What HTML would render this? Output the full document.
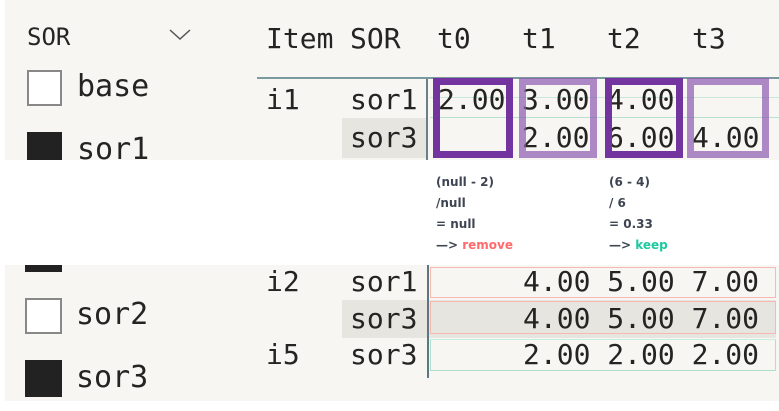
<!DOCTYPE html>
<html><head><style>
*{margin:0;padding:0;box-sizing:border-box}
body{width:779px;height:411px;background:#fff;position:relative;overflow:hidden;font-family:"DejaVu Sans Mono","Liberation Mono",monospace;color:#252423}
.a{position:absolute}
.t{position:absolute;font-size:28px;line-height:30px;white-space:nowrap}
.b{position:absolute;font-size:28px;line-height:30px;white-space:nowrap}
.n{font-family:"DejaVu Sans",sans-serif;font-weight:bold;font-size:12px;color:#3d4452;position:absolute;line-height:14px}
</style></head><body>
<div class="a" style="left:5px;top:0;width:774px;height:160px;background:#f8f6f3;overflow:hidden">
 <div class="t" style="left:22px;top:22px;font-size:24px">SOR</div>
 <svg class="a" style="left:163px;top:28px" width="24" height="14"><path d="M2 2 L12 11 L22 2" stroke="#555" stroke-width="1.5" fill="none"/></svg>
 <div class="a" style="left:22px;top:70px;width:35px;height:36px;border:2px solid #888;background:#fff"></div>
 <div class="t" style="left:72px;top:72px;font-size:30px">base</div>
 <div class="a" style="left:22px;top:132px;width:35px;height:40px;background:#222"></div>
 <div class="t" style="left:72px;top:135px;font-size:30px">sor1</div>
 <div class="t" style="left:261px;top:24px">Item</div>
 <div class="t" style="left:345px;top:24px">SOR</div>
 <div class="t" style="left:432px;top:24px">t0</div>
 <div class="t" style="left:517px;top:24px">t1</div>
 <div class="t" style="left:602px;top:24px">t2</div>
 <div class="t" style="left:687px;top:24px">t3</div>
 <div class="a" style="left:252px;top:77px;width:522px;height:2px;background:#7a9aa0"></div>
 <div class="a" style="left:337px;top:118px;width:84px;height:40px;background:#e6e5e0"></div>
 <div class="a" style="left:421px;top:79px;width:2px;height:81px;background:#6a8088"></div>
 <div class="a" style="left:425px;top:117px;width:349px;height:1px;background:#b8e0d0"></div>
 <div class="a" style="left:425px;top:97px;width:349px;height:1px;background:#c8e8dc"></div>
 <div class="t" style="left:261px;top:85px">i1</div>
 <div class="t" style="left:345px;top:85px">sor1</div>
 <div class="t" style="left:345px;top:123px">sor3</div>
 <div class="t" style="left:433px;top:85px">2.00</div>
 <div class="t" style="left:517px;top:85px">3.00</div>
 <div class="t" style="left:602px;top:85px">4.00</div>
 <div class="t" style="left:517px;top:123px">2.00</div>
 <div class="t" style="left:602px;top:123px">6.00</div>
 <div class="t" style="left:687px;top:123px">4.00</div>
 <div class="a" style="left:428px;top:78px;width:80px;height:80px;border:7px solid #7434a0"></div>
 <div class="a" style="left:514px;top:78px;width:78px;height:80px;border:7px solid rgba(140,90,175,.7)"></div>
 <div class="a" style="left:600px;top:78px;width:78px;height:80px;border:7px solid #7434a0"></div>
 <div class="a" style="left:682px;top:78px;width:82px;height:80px;border:7px solid rgba(140,90,175,.7)"></div>
</div>
<div class="n" style="left:436px;top:175px">(null - 2)</div>
<div class="n" style="left:436px;top:196px">/null</div>
<div class="n" style="left:436px;top:217px">= null</div>
<div class="n" style="left:436px;top:238px">—&gt; <span style="color:#ff6a6a">remove</span></div>
<div class="n" style="left:609px;top:175px">(6 - 4)</div>
<div class="n" style="left:609px;top:196px">/ 6</div>
<div class="n" style="left:609px;top:217px">= 0.33</div>
<div class="n" style="left:609px;top:238px">—&gt; <span style="color:#1ec8a0">keep</span></div>
<div class="a" style="left:5px;top:265px;width:774px;height:136px;background:#f8f6f3;overflow:hidden">
 <div class="a" style="left:20px;top:0;width:37px;height:7px;background:#222"></div>
 <div class="a" style="left:20px;top:33px;width:37px;height:36px;border:2px solid #888;background:#fff"></div>
 <div class="b" style="left:71px;top:35px;font-size:30px">sor2</div>
 <div class="a" style="left:20px;top:95px;width:37px;height:37px;background:#222"></div>
 <div class="b" style="left:71px;top:98px;font-size:30px">sor3</div>
 <div class="a" style="left:337px;top:35px;width:434px;height:38px;background:#e6e5e0"></div>
 <div class="a" style="left:422px;top:0;width:2px;height:113px;background:#5a7880"></div>
 <div class="a" style="left:425px;top:2px;width:346px;height:31px;border:1px solid #f6b8b0"></div>
 <div class="a" style="left:425px;top:36px;width:346px;height:33px;border:1px solid #f6b8b0"></div>
 <div class="a" style="left:425px;top:74px;width:346px;height:32px;border:1px solid #b0e0cc;border-top-color:#c8ece0"></div>
 <div class="b" style="left:261px;top:2px">i2</div>
 <div class="b" style="left:345px;top:2px">sor1</div>
 <div class="b" style="left:345px;top:39px">sor3</div>
 <div class="b" style="left:261px;top:75px">i5</div>
 <div class="b" style="left:345px;top:75px">sor3</div>
 <div class="b" style="left:518px;top:2px">4.00 5.00 7.00</div>
 <div class="b" style="left:518px;top:39px">4.00 5.00 7.00</div>
 <div class="b" style="left:518px;top:75px">2.00 2.00 2.00</div>
</div>
</body></html>
